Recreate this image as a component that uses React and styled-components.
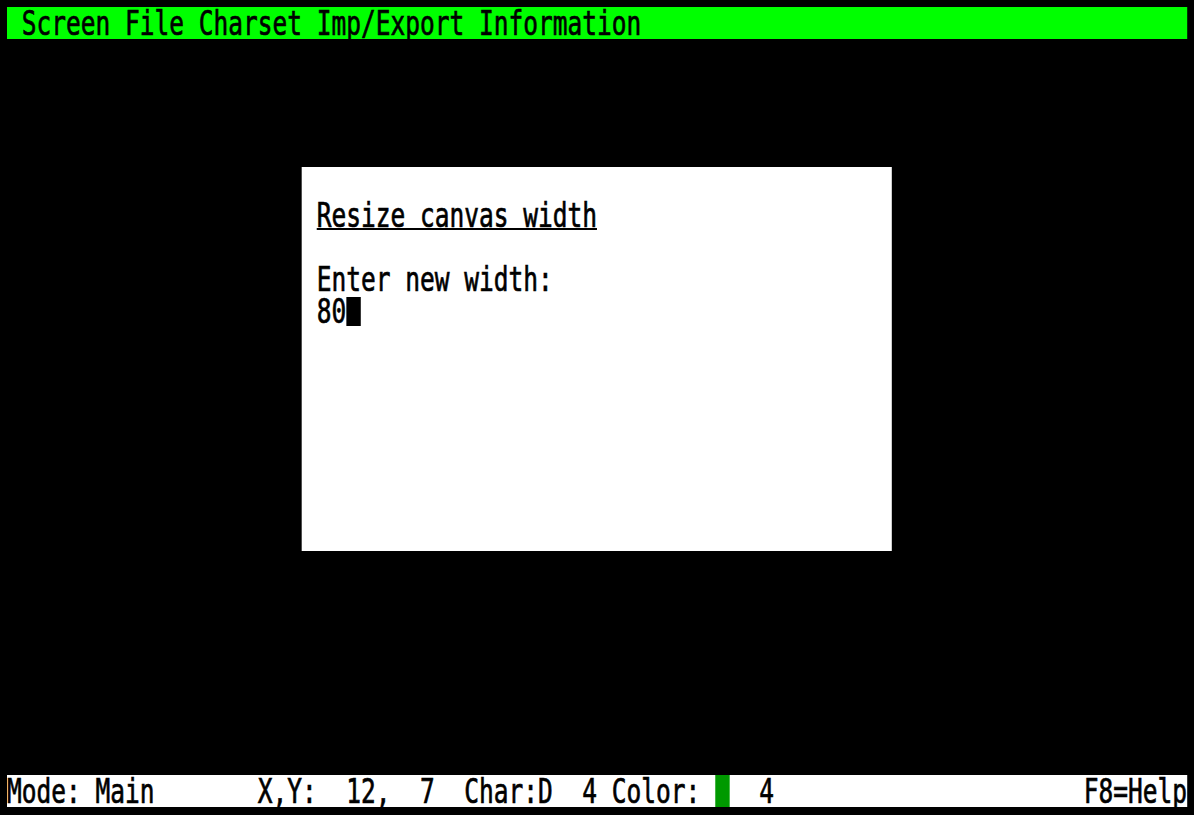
import React from "react";
import styled, { createGlobalStyle } from "styled-components";

// 80 x 25 character screen. Glyphs are drawn tall, then the whole
// screen is squeezed horizontally so 80 columns fit in 1180px.
const COLS = 80;
const ROW = 32;
const FONT_SIZE = 34;
const CH = FONT_SIZE * 0.6021;
const SQUEEZE = 1180 / (COLS * CH);

const GlobalStyle = createGlobalStyle`
  html, body {
    margin: 0;
    padding: 0;
    background: #000;
    overflow: hidden;
  }
`;

const Screen = styled.div`
  width: ${COLS}ch;
  height: ${ROW * 25}px;
  margin: 7px 0 0 7px;
  display: flex;
  flex-direction: column;
  font-family: "DejaVu Sans Mono", "Liberation Mono", monospace;
  font-size: ${FONT_SIZE}px;
  line-height: ${ROW}px;
  white-space: pre;
  color: #000;
  -webkit-text-stroke: 0.7px #000;
  transform: scaleX(${SQUEEZE});
  transform-origin: left top;
`;

const MenuBar = styled.div`
  height: ${ROW}px;
  background: #00ff00;
`;

const Canvas = styled.div`
  flex: 1;
  padding: ${ROW * 4}px 0 0 20ch;
`;

const Dialog = styled.div`
  width: 40ch;
  height: ${ROW * 12}px;
  box-sizing: border-box;
  padding: ${ROW}px 1ch 0;
  background: #fff;
`;

const Line = styled.div`
  height: ${ROW}px;
`;

const Title = styled.span`
  text-decoration: underline;
  text-decoration-thickness: 2px;
  text-underline-offset: 1px;
`;

const Cursor = styled.span`
  display: inline-block;
  width: 1ch;
  height: 29px;
  margin-top: 2px;
  vertical-align: top;
  background: #000;
`;

const StatusBar = styled.div`
  height: ${ROW}px;
  display: flex;
  background: #fff;
`;

const Swatch = styled.span`
  width: 1ch;
  height: ${ROW}px;
  background: ${({ color }) => color};
`;

const Spacer = styled.span`
  flex: 1;
`;

export default function App() {
  return (
    <>
      <GlobalStyle />
      <Screen>
        <MenuBar>{" Screen File Charset Imp/Export Information"}</MenuBar>
        <Canvas>
          <Dialog>
            <Line>
              <Title>Resize canvas width</Title>
            </Line>
            <Line />
            <Line>Enter new width:</Line>
            <Line>
              80
              <Cursor />
            </Line>
          </Dialog>
        </Canvas>
        <StatusBar>
          <span>{"Mode: Main       X,Y:  12,  7  Char:D  4 Color: "}</span>
          <Swatch color="#009900" />
          <span>{"  4"}</span>
          <Spacer />
          <span>F8=Help</span>
        </StatusBar>
      </Screen>
    </>
  );
}
